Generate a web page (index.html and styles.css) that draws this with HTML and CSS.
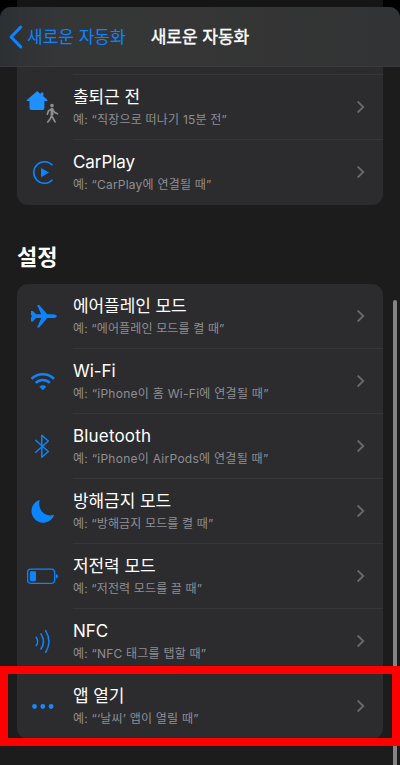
FILE: index.html
```
<!DOCTYPE html>
<html lang="ko">
<head>
<meta charset="utf-8">
<title>새로운 자동화</title>
<link rel="stylesheet" href="styles.css">
</head>
<body>
<svg class="defs" width="0" height="0"><defs><symbol id="chev" viewBox="0 0 9 14"><path d="M1.2 1.1 7.2 7 1.2 12.9" fill="none" stroke="#69696d" stroke-width="2"/></symbol></defs></svg>
<div class="behind"></div>
<main class="sheet">
  <header class="nav">
    <svg class="back" width="14" height="24" viewBox="0 0 14 24"><path d="M11.7 2.1 2.1 12l9.6 9.9" fill="none" stroke="#0a84ff" stroke-width="3" stroke-linecap="round" stroke-linejoin="round"/></svg>
    <span class="back-label">새로운 자동화</span>
    <h1>새로운 자동화</h1>
  </header>
  <section class="card upper">
    <div class="sliver"></div>
    <div class="row">
      <svg class="icon" viewBox="17 0 56 65"><path d="M26.6 25.2 36.6 16.6q.6-.5 1.2 0l3 2.6v-1.6h2.5v3.7l4.5 3.9-1 .9h-2.4v7q0 2-2 2H31.5q-2 0-2-2v-7h-2.4Z" fill="#1e90ff"/><circle cx="52" cy="30.6" r="1.8" fill="#8e8e93"/><path d="M51.8 34v7l3.3 5.8M51.5 40.5l-1.2 3.3-2.5 3.2M51.4 34.2l-3 1.8-1 3.2M52.6 34.5l2.2 3 2.7 1.2" fill="none" stroke="#8e8e93" stroke-width="1.7" stroke-linecap="round" stroke-linejoin="round"/><path d="M50.7 33h2.6l.3 7h-3Z" fill="#8e8e93"/></svg>
      <div class="text"><h3>출퇴근 전</h3><p class="mid">예: “직장으로 떠나기 15분 전”</p></div>
      <svg class="chev"><use href="#chev"/></svg>
    </div>
    <div class="row">
      <svg class="icon" viewBox="17 0 56 65"><path d="M52.5 25.2A10.8 10.8 0 1 0 52.5 39.8" fill="none" stroke="#0a84ff" stroke-width="1.6"/><path d="M41 28v9.2l8-4.6Z" fill="#0a84ff"/></svg>
      <div class="text"><h3>CarPlay</h3><p class="mid">예: “CarPlay에 연결될 때”</p></div>
      <svg class="chev"><use href="#chev"/></svg>
    </div>
  </section>
  <h2>설정</h2>
  <section class="card">
    <div class="row">
      <svg class="icon" viewBox="17 0 56 65"><path d="M31 27h1.9l3.2 3.3h5.2L37 21h2.2l8 9.3H53c2 0 3.8.8 3.8 1.9s-1.8 1.9-3.8 1.9h-5.8l-8 9.3H37l4.3-9.3h-5.2l-3.2 3.3H31v-3.8l1-1.4-1-1.4Z" fill="#0a84ff"/></svg>
      <div class="text"><h3>에어플레인 모드</h3><p>예: “에어플레인 모드를 켤 때”</p></div>
      <svg class="chev"><use href="#chev"/></svg>
    </div>
    <div class="row">
      <svg class="icon" viewBox="17 0 56 65"><path d="M31.5 29.8a16 16 0 0 1 22.6 0M35.8 33.8a10 10 0 0 1 14 0" fill="none" stroke="#0a84ff" stroke-width="2.5"/><path d="M39.3 37.7q3.5-2.8 7 0l-3.5 3.6Z" fill="#0a84ff"/></svg>
      <div class="text"><h3>Wi-Fi</h3><p class="wide">예: “iPhone이 홈 Wi-Fi에 연결될 때”</p></div>
      <svg class="chev"><use href="#chev"/></svg>
    </div>
    <div class="row">
      <svg class="icon" viewBox="17 0 56 65"><path d="m35.7 26.2 12.6 11.3-6.5 5.7V21.3l6.5 5.7-12.6 11.3" fill="none" stroke="#0a84ff" stroke-width="1.5" stroke-linecap="round" stroke-linejoin="round"/></svg>
      <div class="text"><h3 class="spaced">Bluetooth</h3><p class="wide">예: “iPhone이 AirPods에 연결될 때”</p></div>
      <svg class="chev"><use href="#chev"/></svg>
    </div>
    <div class="row">
      <svg class="icon" viewBox="17 0 56 65"><path d="M39.6 21.2c-2 7.5 3 15.2 10.6 15.2 1.5 0 2.7-.2 3.7-.6.3-.1.3.2.2.5A11.7 11.7 0 1 1 39.2 21c.3-.2.5-.1.4.2Z" fill="#0a84ff"/></svg>
      <div class="text"><h3>방해금지 모드</h3><p>예: “방해금지 모드를 켤 때”</p></div>
      <svg class="chev"><use href="#chev"/></svg>
    </div>
    <div class="row">
      <svg class="icon" viewBox="17 0 56 65"><rect x="27.6" y="25.1" width="27" height="14.2" rx="3.2" fill="none" stroke="#0a84ff" stroke-width="1.3"/><rect x="29.8" y="27.2" width="6.2" height="10" rx="1.4" fill="#0a84ff"/><path d="M56 29.9q2 .6 2 2.3T56 34.5Z" fill="#0a84ff"/></svg>
      <div class="text"><h3>저전력 모드</h3><p>예: “저전력 모드를 끌 때”</p></div>
      <svg class="chev"><use href="#chev"/></svg>
    </div>
    <div class="row">
      <svg class="icon" viewBox="17 0 56 65"><path d="M36.2 28.2q3 4.2 0 8.4M40.9 24.8q5.1 7.6 0 15.2M45.6 21.6q6.7 10.9 0 21.8" fill="none" stroke="#0a84ff" stroke-width="1.5" stroke-linecap="round"/></svg>
      <div class="text"><h3>NFC</h3><p class="mid">예: “NFC 태그를 탭할 때”</p></div>
      <svg class="chev"><use href="#chev"/></svg>
    </div>
    <div class="row">
      <svg class="icon" viewBox="17 0 56 65"><g fill="#1e86fa"><circle cx="34.5" cy="32.5" r="2.4"/><circle cx="42.8" cy="32.5" r="2.4"/><circle cx="51.1" cy="32.5" r="2.4"/></g></svg>
      <div class="text"><h3>앱 열기</h3><p class="mid">예: “‘날씨’ 앱이 열릴 때”</p></div>
      <svg class="chev"><use href="#chev"/></svg>
    </div>
  </section>
  <div class="scrollbar"></div>
  <div class="highlight"></div>
</main>
</body>
</html>
```

FILE: styles.css
```
* { box-sizing: border-box; margin: 0; padding: 0; }
html { height: 765px; overflow: hidden; background: #000; }
body {
  position: relative;
  height: 765px;
  overflow: hidden;
  background: #000;
  color: #fff;
  font-family: Inter, "Noto Sans CJK KR", sans-serif;
}
.defs { position: absolute; }
.behind { height: 7px; margin: 0 17px; background: #151515; }
.sheet { height: 758px; overflow: hidden; background: #1c1c1d; border-radius: 11px 11px 0 0; }
.nav {
  display: flex;
  align-items: center;
  height: 60px;
  padding-left: 9px;
  background: linear-gradient(90deg, #2d3033 0, #353637 15%, #363636 40%, #323334 100%);
  border-bottom: 1px solid #3a3a3c;
}
.back { flex: none; }
.back-label, h1 { font-size: 17px; line-height: 24px; white-space: nowrap; }
.back-label { margin-left: 4px; color: #0a84ff; }
h1 { margin-left: 25px; font-weight: 400; -webkit-text-stroke: .4px #fff; }
.card { width: 366px; margin-left: 17px; background: #2c2c2e; border-radius: 11px; overflow: hidden; }
.upper { border-radius: 0 0 11px 11px; }
.sliver { height: 8px; margin-left: 56px; border-bottom: 1px solid #363638; }
.row { display: flex; height: 65px; }
.icon { flex: none; width: 56px; height: 65px; }
.text { flex: 1; border-bottom: 1px solid #363638; white-space: nowrap; }
.row:last-child .text { border-bottom: 0; }
.row .chev { flex: none; width: 27px; height: 65px; padding: 25.5px 17.5px 25.5px 0; border-bottom: 1px solid #363638; }
.row:last-child .chev { border-bottom-color: transparent; }
h3 { height: 24px; margin-top: 10px; font-size: 17px; line-height: 24px; font-weight: 400; letter-spacing: -.08px; }
.spaced { letter-spacing: .17px; }
p { height: 18px; margin-top: 2px; color: #8e8e93; font-size: 12px; line-height: 18px; letter-spacing: .14px; }
.mid { letter-spacing: .21px; }
.wide { letter-spacing: .27px; }
h2 { height: 79px; padding-top: 36px; margin-left: 17px; font-size: 22px; line-height: 32px; font-weight: 700; }
.scrollbar { position: absolute; left: 393px; top: 300px; width: 4px; height: 465px; background: #848485; border-radius: 2px 2px 0 0; }
.highlight { position: absolute; left: 0; top: 666px; width: 400px; height: 80px; border: 8px solid #f00; }
```
